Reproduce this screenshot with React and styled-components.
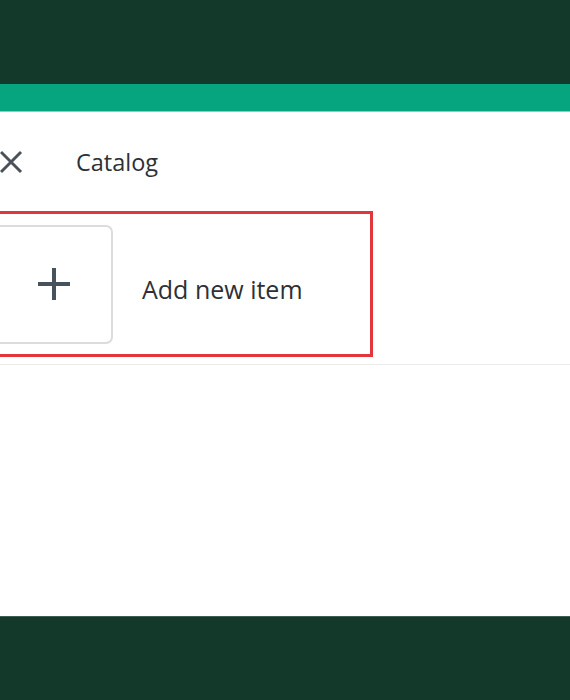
import React from "react";
import styled, { createGlobalStyle } from "styled-components";

const Global = createGlobalStyle`
  html, body { margin: 0; padding: 0; }
  body { font-family: "Open Sans", "Noto Sans", sans-serif; background: #fff; overflow: hidden; }
`;

const Page = styled.div`
  display: flex;
  flex-direction: column;
  width: 570px;
  height: 700px;
`;

const TopBar = styled.div`
  height: 84px;
  background: #12392a;
`;

const AccentBar = styled.div`
  height: 28px;
  background: #06a47f;
  box-sizing: border-box;
  border-bottom: 1px solid #7fd6c0;
`;

const Panel = styled.div`
  flex: 1;
  background: #fff;
  display: flex;
  flex-direction: column;
  overflow: hidden;
`;

const Header = styled.div`
  height: 99px;
  display: flex;
  align-items: center;
  gap: 53px;
  margin-left: -1px;
`;

const Title = styled.span`
  font-size: 23.5px;
  color: #2d3136;
  margin-top: 1px;
`;

const ItemRow = styled.div`
  margin-left: -20px;
  width: 393px;
  height: 146px;
  box-sizing: border-box;
  border: 3px solid #e2363d;
  padding: 11px;
  display: flex;
  align-items: center;
  gap: 29px;
`;

const AddCard = styled.div`
  width: 119px;
  height: 119px;
  box-sizing: border-box;
  border: 2px solid #dcdcdc;
  border-radius: 7px;
  display: flex;
  align-items: center;
  justify-content: center;
  flex-shrink: 0;
`;

const Label = styled.span`
  font-size: 25px;
  color: #2d3136;
  margin-top: 10px;
`;

const Divider = styled.div`
  margin-top: 7px;
  height: 1px;
  background: #ebebeb;
`;

const Footer = styled.div`
  height: 84px;
  background: #12392a;
  border-top: 1px solid #3d5e50;
  box-sizing: border-box;
`;

const CloseIcon = () => (
  <svg width="24" height="24" viewBox="0 0 24 24">
    <path d="M2 2 L22 22 M22 2 L2 22" stroke="#4b5158" strokeWidth="3" strokeLinecap="butt" fill="none" />
  </svg>
);

const PlusIcon = () => (
  <svg width="34" height="34" viewBox="0 0 34 34">
    <path d="M17 1 V33 M1 17 H33" stroke="#47535c" strokeWidth="4" fill="none" />
  </svg>
);

export default function App() {
  return (
    <>
      <Global />
      <Page>
        <TopBar />
        <AccentBar />
        <Panel>
          <Header>
            <CloseIcon />
            <Title>Catalog</Title>
          </Header>
          <ItemRow>
            <AddCard>
              <PlusIcon />
            </AddCard>
            <Label>Add new item</Label>
          </ItemRow>
          <Divider />
        </Panel>
        <Footer />
      </Page>
    </>
  );
}
